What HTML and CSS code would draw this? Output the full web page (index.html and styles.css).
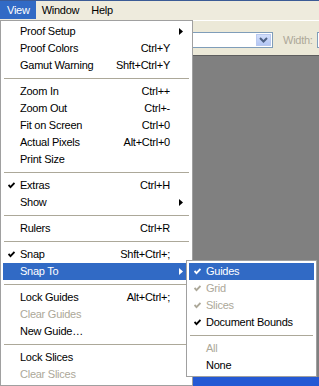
FILE: index.html
```html
<!DOCTYPE html>
<html>
<head>
<meta charset="utf-8">
<link rel="stylesheet" href="styles.css">
</head>
<body>
<div class="app">
  <div class="topline"></div>
  <div class="menubar">
    <span class="mb-item active">View</span>
    <span class="mb-item">Window</span>
    <span class="mb-item">Help</span>
  </div>
  <div class="toolbar">
    <div class="combo">
      <div class="combo-btn">
        <svg width="9" height="6" viewBox="0 0 9 6"><polyline points="1,1 4.5,4.5 8,1" fill="none" stroke="#4D6185" stroke-width="2"/></svg>
      </div>
    </div>
    <span class="tb-label">Width:</span>
    <div class="tb-input"></div>
  </div>
  <div class="workspace"></div>
  <div class="taskbar"></div>

  <div class="menu main-menu">
    <div class="item"><span>Proof Setup</span><svg class="arrow" width="4" height="7" viewBox="0 0 4 7"><polygon points="0,0 4,3.5 0,7" fill="#000"/></svg></div>
    <div class="item"><span>Proof Colors</span><span>Ctrl+Y</span></div>
    <div class="item"><span>Gamut Warning</span><span>Shft+Ctrl+Y</span></div>
    <div class="sep"></div>
    <div class="item"><span>Zoom In</span><span>Ctrl++</span></div>
    <div class="item"><span>Zoom Out</span><span>Ctrl+-</span></div>
    <div class="item"><span>Fit on Screen</span><span>Ctrl+0</span></div>
    <div class="item"><span>Actual Pixels</span><span>Alt+Ctrl+0</span></div>
    <div class="item"><span>Print Size</span></div>
    <div class="sep"></div>
    <div class="item"><svg class="check" width="7" height="7" viewBox="0 0 7 7"><polyline points="0.5,3 2.5,5.2 6.5,1" fill="none" stroke="#000" stroke-width="1.9"/></svg><span>Extras</span><span>Ctrl+H</span></div>
    <div class="item"><span>Show</span><svg class="arrow" width="4" height="7" viewBox="0 0 4 7"><polygon points="0,0 4,3.5 0,7" fill="#000"/></svg></div>
    <div class="sep"></div>
    <div class="item"><span>Rulers</span><span>Ctrl+R</span></div>
    <div class="sep"></div>
    <div class="item"><svg class="check" width="7" height="7" viewBox="0 0 7 7"><polyline points="0.5,3 2.5,5.2 6.5,1" fill="none" stroke="#000" stroke-width="1.9"/></svg><span>Snap</span><span>Shft+Ctrl+;</span></div>
    <div class="item hl"><span>Snap To</span><svg class="arrow" width="4" height="7" viewBox="0 0 4 7"><polygon points="0,0 4,3.5 0,7" fill="#fff"/></svg></div>
    <div class="sep"></div>
    <div class="item"><span>Lock Guides</span><span>Alt+Ctrl+;</span></div>
    <div class="item dis"><span>Clear Guides</span></div>
    <div class="item"><span>New Guide…</span></div>
    <div class="sep"></div>
    <div class="item"><span>Lock Slices</span></div>
    <div class="item dis"><span>Clear Slices</span></div>
  </div>

  <div class="menu sub-menu">
    <div class="item hl"><svg class="check" width="7" height="7" viewBox="0 0 7 7"><polyline points="0.5,3 2.5,5.2 6.5,1" fill="none" stroke="#fff" stroke-width="1.9"/></svg><span>Guides</span></div>
    <div class="item dis"><svg class="check" width="7" height="7" viewBox="0 0 7 7"><polyline points="0.5,3 2.5,5.2 6.5,1" fill="none" stroke="#ACA899" stroke-width="1.9"/></svg><span>Grid</span></div>
    <div class="item dis"><svg class="check" width="7" height="7" viewBox="0 0 7 7"><polyline points="0.5,3 2.5,5.2 6.5,1" fill="none" stroke="#ACA899" stroke-width="1.9"/></svg><span>Slices</span></div>
    <div class="item"><svg class="check" width="7" height="7" viewBox="0 0 7 7"><polyline points="0.5,3 2.5,5.2 6.5,1" fill="none" stroke="#000" stroke-width="1.9"/></svg><span>Document Bounds</span></div>
    <div class="sep"></div>
    <div class="item dis"><span>All</span></div>
    <div class="item"><span>None</span></div>
  </div>
</div>
</body>
</html>
```

FILE: styles.css
```css
* { box-sizing: border-box; }
html, body { margin: 0; padding: 0; }
body { width: 319px; height: 386px; overflow: hidden; }

.app {
  position: relative;
  width: 319px;
  height: 386px;
  overflow: hidden;
  display: flex;
  flex-direction: column;
  font-family: "Liberation Sans", Arial, sans-serif;
  font-size: 11px;
  letter-spacing: -0.25px;
  color: #000;
  background: #ECE9D8;
}

.topline { height: 1px; background: #3B5B96; flex: none; }

.menubar {
  height: 19px;
  flex: none;
  display: flex;
  background: #EEEBDD;
}
.mb-item {
  line-height: 18px;
  height: 18px;
  padding: 0 6px;
}
.mb-item.active {
  padding-left: 7px;
  background: #316AC5;
  color: #fff;
}

.toolbar {
  height: 35px;
  flex: none;
  display: flex;
  align-items: flex-start;
  padding-top: 11px;
  background: #ECE9D8;
  border-top: 1px solid #FFFFFF;
}
.combo {
  flex: none;
  margin-left: 150px;
  width: 123px;
  height: 16px;
  border: 1px solid #7F9DB9;
  background: #fff;
  display: flex;
  justify-content: flex-end;
  padding: 1px;
}
.combo-btn {
  width: 15px;
  height: 12px;
  background: linear-gradient(#D2DEFB, #B3C6F4);
  border: 1px solid #B9C9EF;
  display: flex;
  align-items: center;
  justify-content: center;
}
.tb-label {
  flex: none;
  margin-left: 10px;
  line-height: 16px;
  color: #ACA899;
}
.tb-input {
  flex: none;
  margin-left: 4px;
  width: 30px;
  height: 16px;
  border: 1px solid #7F9DB9;
  background: #fff;
}

.workspace {
  flex: 1;
  background: #808080;
  border-top: 1px solid #5E5E5E;
}
.taskbar {
  height: 9px;
  flex: none;
  background: #2459D4;
}

.menu {
  position: absolute;
  background: #fff;
  border: 1px solid #A0A0A0;
  padding: 2px;
}
.main-menu {
  left: 0;
  top: 20px;
  width: 193px;
  height: 366px;
}
.sub-menu {
  left: 186px;
  top: 260px;
  width: 131px;
  height: 117px;
}

.item {
  position: relative;
  height: 17px;
  line-height: 17px;
  padding: 0 20px 0 17px;
  display: flex;
  justify-content: space-between;
  white-space: nowrap;
}
.item.hl { background: #316AC5; color: #fff; }
.item.dis { color: #ACA899; }

.check {
  position: absolute;
  left: 5px;
  top: 5px;
}
.arrow {
  position: absolute;
  right: 7px;
  top: 5px;
}

.sep {
  height: 9px;
  display: flex;
  align-items: center;
}
.sep::after {
  content: "";
  flex: 1;
  height: 1px;
  margin: 0 1px;
  background: #ACA899;
}
```
